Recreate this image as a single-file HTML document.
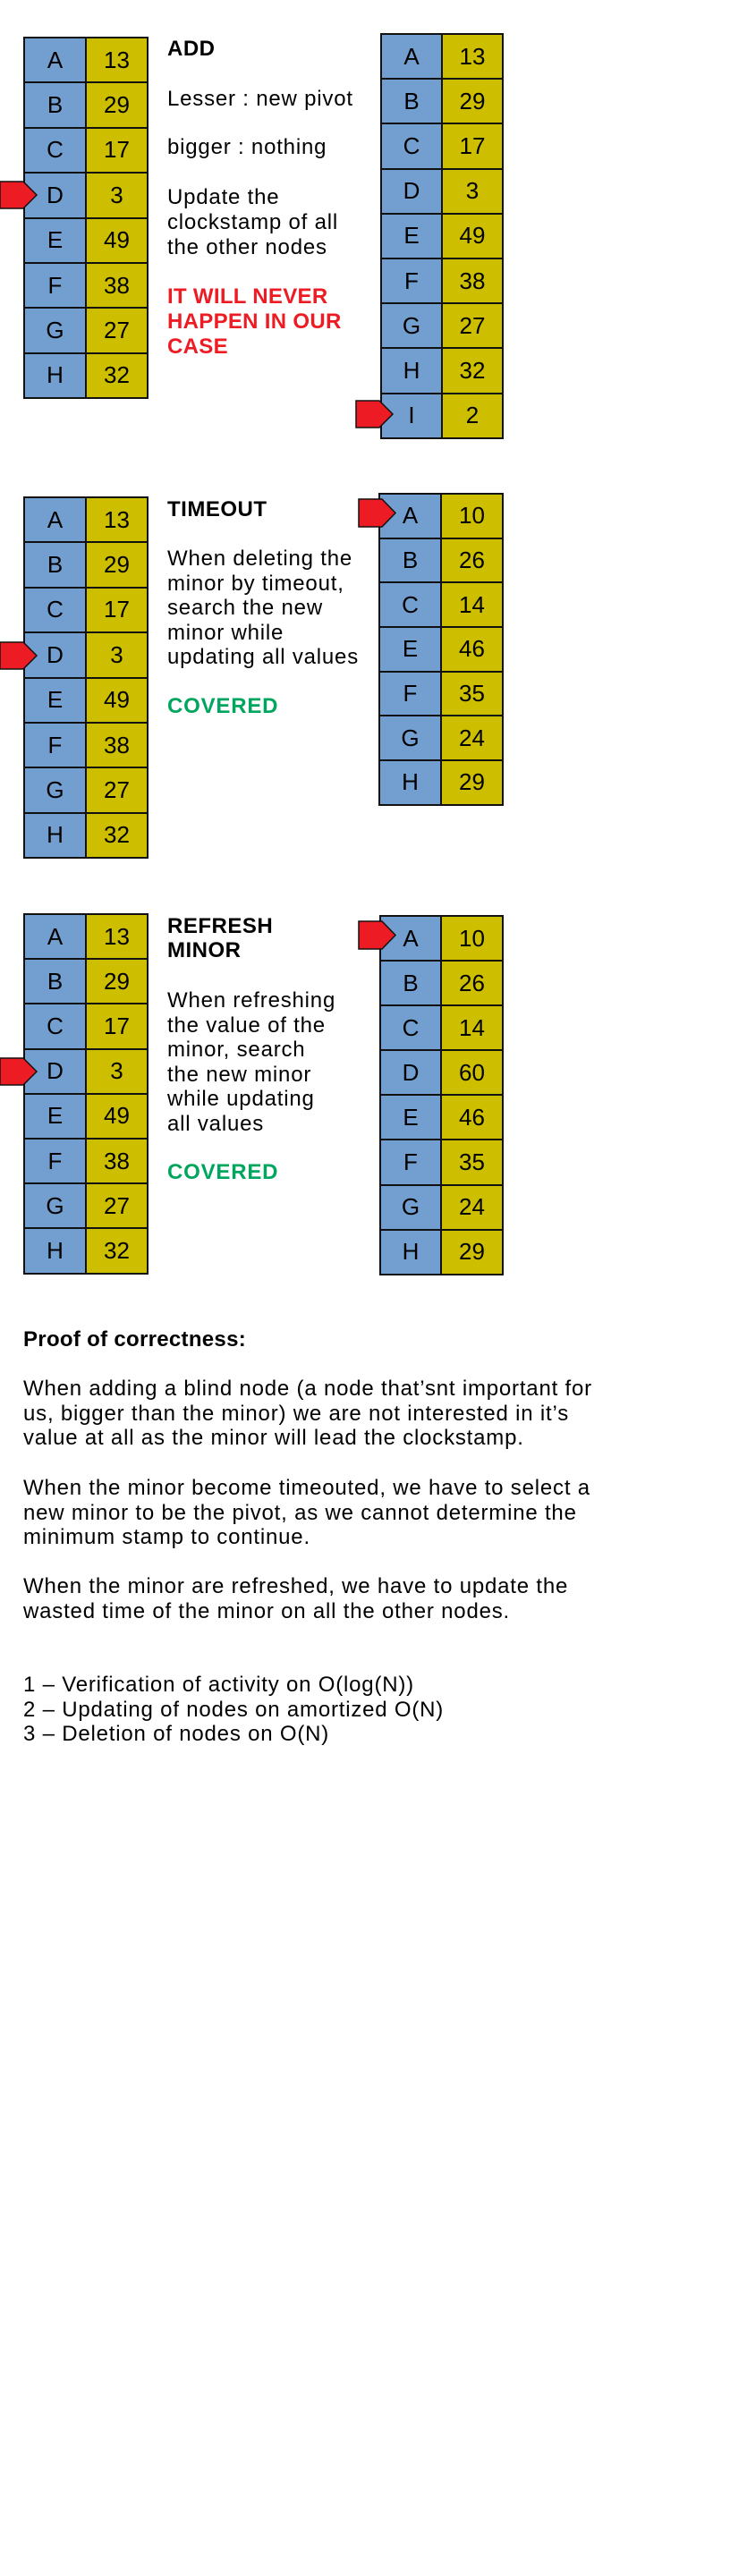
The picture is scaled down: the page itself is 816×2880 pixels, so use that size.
<!DOCTYPE html>
<html><head><meta charset="utf-8"><style>
body{margin:0;width:816px;height:2880px;background:#fff;position:relative;font-family:"Liberation Sans",sans-serif;color:#000;overflow:hidden}
.t{position:absolute;border:1px solid #111}
.r{display:flex;box-sizing:border-box}
.r div{box-sizing:border-box;border:1px solid #111;display:flex;align-items:center;justify-content:center;font-size:26px}
.r .k{background:#729fcf}
.r .v{background:#cdbf00}
.tx{position:absolute;left:187px;font-size:24px;line-height:28px;letter-spacing:0.8px;white-space:nowrap}
.b{font-weight:bold;letter-spacing:0.5px}
.red{color:#ed1c24;font-weight:bold}
.grn{color:#00a65d;font-weight:bold}
svg{position:absolute;left:0;top:0}
</style></head><body>

<!-- ADD -->
<div class="t" style="left:26px;top:41px;width:138px">
<div class="r" style="height:50.4px"><div class="k" style="width:69px">A</div><div class="v" style="width:69px">13</div></div>
<div class="r" style="height:50.4px"><div class="k" style="width:69px">B</div><div class="v" style="width:69px">29</div></div>
<div class="r" style="height:50.4px"><div class="k" style="width:69px">C</div><div class="v" style="width:69px">17</div></div>
<div class="r" style="height:50.4px"><div class="k" style="width:69px">D</div><div class="v" style="width:69px">3</div></div>
<div class="r" style="height:50.4px"><div class="k" style="width:69px">E</div><div class="v" style="width:69px">49</div></div>
<div class="r" style="height:50.4px"><div class="k" style="width:69px">F</div><div class="v" style="width:69px">38</div></div>
<div class="r" style="height:50.4px"><div class="k" style="width:69px">G</div><div class="v" style="width:69px">27</div></div>
<div class="r" style="height:50.4px"><div class="k" style="width:69px">H</div><div class="v" style="width:69px">32</div></div>
</div>
<div class="tx b" style="top:41px">ADD</div>
<div class="tx" style="top:97px">Lesser : new pivot</div>
<div class="tx" style="top:151px">bigger : nothing</div>
<div class="tx" style="top:207px">Update the<br>clockstamp of all<br>the other nodes</div>
<div class="tx red" style="top:318px;letter-spacing:0.3px">IT WILL NEVER<br>HAPPEN IN OUR<br>CASE</div>
<div class="t" style="left:425px;top:37px;width:136px">
<div class="r" style="height:50.2px"><div class="k" style="width:68px">A</div><div class="v" style="width:68px">13</div></div>
<div class="r" style="height:50.2px"><div class="k" style="width:68px">B</div><div class="v" style="width:68px">29</div></div>
<div class="r" style="height:50.2px"><div class="k" style="width:68px">C</div><div class="v" style="width:68px">17</div></div>
<div class="r" style="height:50.2px"><div class="k" style="width:68px">D</div><div class="v" style="width:68px">3</div></div>
<div class="r" style="height:50.2px"><div class="k" style="width:68px">E</div><div class="v" style="width:68px">49</div></div>
<div class="r" style="height:50.2px"><div class="k" style="width:68px">F</div><div class="v" style="width:68px">38</div></div>
<div class="r" style="height:50.2px"><div class="k" style="width:68px">G</div><div class="v" style="width:68px">27</div></div>
<div class="r" style="height:50.2px"><div class="k" style="width:68px">H</div><div class="v" style="width:68px">32</div></div>
<div class="r" style="height:50.2px"><div class="k" style="width:68px">I</div><div class="v" style="width:68px">2</div></div>
</div>

<!-- TIMEOUT -->
<div class="t" style="left:26px;top:555px;width:138px">
<div class="r" style="height:50.4px"><div class="k" style="width:69px">A</div><div class="v" style="width:69px">13</div></div>
<div class="r" style="height:50.4px"><div class="k" style="width:69px">B</div><div class="v" style="width:69px">29</div></div>
<div class="r" style="height:50.4px"><div class="k" style="width:69px">C</div><div class="v" style="width:69px">17</div></div>
<div class="r" style="height:50.4px"><div class="k" style="width:69px">D</div><div class="v" style="width:69px">3</div></div>
<div class="r" style="height:50.4px"><div class="k" style="width:69px">E</div><div class="v" style="width:69px">49</div></div>
<div class="r" style="height:50.4px"><div class="k" style="width:69px">F</div><div class="v" style="width:69px">38</div></div>
<div class="r" style="height:50.4px"><div class="k" style="width:69px">G</div><div class="v" style="width:69px">27</div></div>
<div class="r" style="height:50.4px"><div class="k" style="width:69px">H</div><div class="v" style="width:69px">32</div></div>
</div>
<div class="tx b" style="top:556px">TIMEOUT</div>
<div class="tx" style="top:611px;line-height:27.5px">When deleting the<br>minor by timeout,<br>search the new<br>minor while<br>updating all values</div>
<div class="tx grn" style="top:776px">COVERED</div>
<div class="t" style="left:423px;top:551px;width:138px">
<div class="r" style="height:49.7px"><div class="k" style="width:69px">A</div><div class="v" style="width:69px">10</div></div>
<div class="r" style="height:49.7px"><div class="k" style="width:69px">B</div><div class="v" style="width:69px">26</div></div>
<div class="r" style="height:49.7px"><div class="k" style="width:69px">C</div><div class="v" style="width:69px">14</div></div>
<div class="r" style="height:49.7px"><div class="k" style="width:69px">E</div><div class="v" style="width:69px">46</div></div>
<div class="r" style="height:49.7px"><div class="k" style="width:69px">F</div><div class="v" style="width:69px">35</div></div>
<div class="r" style="height:49.7px"><div class="k" style="width:69px">G</div><div class="v" style="width:69px">24</div></div>
<div class="r" style="height:49.7px"><div class="k" style="width:69px">H</div><div class="v" style="width:69px">29</div></div>
</div>

<!-- REFRESH -->
<div class="t" style="left:26px;top:1021px;width:138px">
<div class="r" style="height:50.2px"><div class="k" style="width:69px">A</div><div class="v" style="width:69px">13</div></div>
<div class="r" style="height:50.2px"><div class="k" style="width:69px">B</div><div class="v" style="width:69px">29</div></div>
<div class="r" style="height:50.2px"><div class="k" style="width:69px">C</div><div class="v" style="width:69px">17</div></div>
<div class="r" style="height:50.2px"><div class="k" style="width:69px">D</div><div class="v" style="width:69px">3</div></div>
<div class="r" style="height:50.2px"><div class="k" style="width:69px">E</div><div class="v" style="width:69px">49</div></div>
<div class="r" style="height:50.2px"><div class="k" style="width:69px">F</div><div class="v" style="width:69px">38</div></div>
<div class="r" style="height:50.2px"><div class="k" style="width:69px">G</div><div class="v" style="width:69px">27</div></div>
<div class="r" style="height:50.2px"><div class="k" style="width:69px">H</div><div class="v" style="width:69px">32</div></div>
</div>
<div class="tx b" style="top:1022px;line-height:27px">REFRESH<br>MINOR</div>
<div class="tx" style="top:1105px;line-height:27.5px">When refreshing<br>the value of the<br>minor, search<br>the new minor<br>while updating<br>all values</div>
<div class="tx grn" style="top:1297px">COVERED</div>
<div class="t" style="left:424px;top:1023px;width:137px">
<div class="r" style="height:50.1px"><div class="k" style="width:68px">A</div><div class="v" style="width:69px">10</div></div>
<div class="r" style="height:50.1px"><div class="k" style="width:68px">B</div><div class="v" style="width:69px">26</div></div>
<div class="r" style="height:50.1px"><div class="k" style="width:68px">C</div><div class="v" style="width:69px">14</div></div>
<div class="r" style="height:50.1px"><div class="k" style="width:68px">D</div><div class="v" style="width:69px">60</div></div>
<div class="r" style="height:50.1px"><div class="k" style="width:68px">E</div><div class="v" style="width:69px">46</div></div>
<div class="r" style="height:50.1px"><div class="k" style="width:68px">F</div><div class="v" style="width:69px">35</div></div>
<div class="r" style="height:50.1px"><div class="k" style="width:68px">G</div><div class="v" style="width:69px">24</div></div>
<div class="r" style="height:50.1px"><div class="k" style="width:68px">H</div><div class="v" style="width:69px">29</div></div>
</div>

<svg width="816" height="1500">
<g fill="#ed1c24" stroke="#111" stroke-width="1.5">
<polygon points="0,203 26,203 41,218 26,233 0,233"/>
<polygon points="398,448 424,448 439,463 424,478 398,478"/>
<polygon points="0,718 26,718 41,733 26,748 0,748"/>
<polygon points="0,1183 26,1183 41,1198 26,1213 0,1213"/>
<polygon points="401,558 427,558 442,573.5 427,589 401,589"/>
<polygon points="401,1030 427,1030 442,1045.5 427,1061 401,1061"/>
</g>
</svg>

<!-- PROOF -->
<div class="tx b" style="left:26px;top:1484px;letter-spacing:0.3px">Proof of correctness:</div>
<div class="tx" style="left:26px;top:1539px;line-height:27.5px">When adding a blind node (a node that’snt important for<br>us, bigger than the minor) we are not interested in it’s<br>value at all as the minor will lead the clockstamp.</div>
<div class="tx" style="left:26px;top:1650px;line-height:27.5px">When the minor become timeouted, we have to select a<br>new minor to be the pivot, as we cannot determine the<br>minimum stamp to continue.</div>
<div class="tx" style="left:26px;top:1760px;line-height:28px">When the minor are refreshed, we have to update the<br>wasted time of the minor on all the other nodes.</div>
<div class="tx" style="left:26px;top:1870px;line-height:27.5px">1 – Verification of activity on O(log(N))<br>2 – Updating of nodes on amortized O(N)<br>3 – Deletion of nodes on O(N)</div>
</body></html>
